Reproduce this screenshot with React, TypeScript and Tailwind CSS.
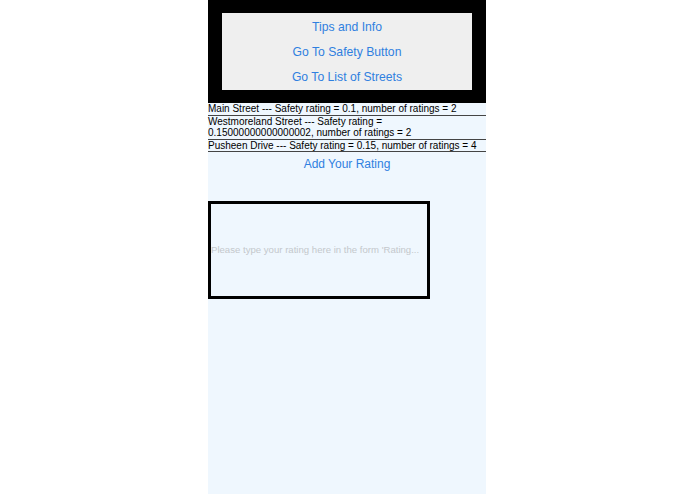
const streets = [
  { name: "Main Street", rating: "0.1", count: 2 },
  { name: "Westmoreland Street", rating: "0.15000000000000002", count: 2 },
  { name: "Pusheen Drive", rating: "0.15", count: 4 },
];

export default function App() {
  return (
    <div className="min-h-screen bg-white flex justify-center" style={{ fontFamily: '"Liberation Sans", Arial, sans-serif' }}>
      <div className="w-[278px] mr-[1px] min-h-[494px] bg-[#eff7fe] flex flex-col">
        {/* nav */}
        <div className="bg-black h-[103px] px-[14px] pt-[13px]">
          <div className="bg-[#efefef] h-[77px] flex flex-col items-center justify-center gap-[8px] pt-[2px] text-[12.2px] leading-[17px] text-[#2f80e0]">
            <button>Tips and Info</button>
            <button>Go To Safety Button</button>
            <button>Go To List of Streets</button>
          </div>
        </div>

        {/* list */}
        <ul className="text-[10px] leading-[11.5px] text-black">
          {streets.map((s) => (
            <li key={s.name} className="border-b border-[#444]">
              {s.name} --- Safety rating = {s.rating}, number of ratings = {s.count}
            </li>
          ))}
        </ul>

        <button className="mt-[4px] text-[12px] leading-[16px] text-[#2f80e0] text-center">Add Your Rating</button>

        <div className="mt-[29px] w-[222px] h-[98px] border-[3px] border-black flex items-center">
          <input
            className="w-full bg-transparent outline-none text-[9.6px] text-black placeholder:text-[#c4c8cc]"
            placeholder="Please type your rating here in the form 'Rating..."
          />
        </div>
      </div>
    </div>
  );
}
